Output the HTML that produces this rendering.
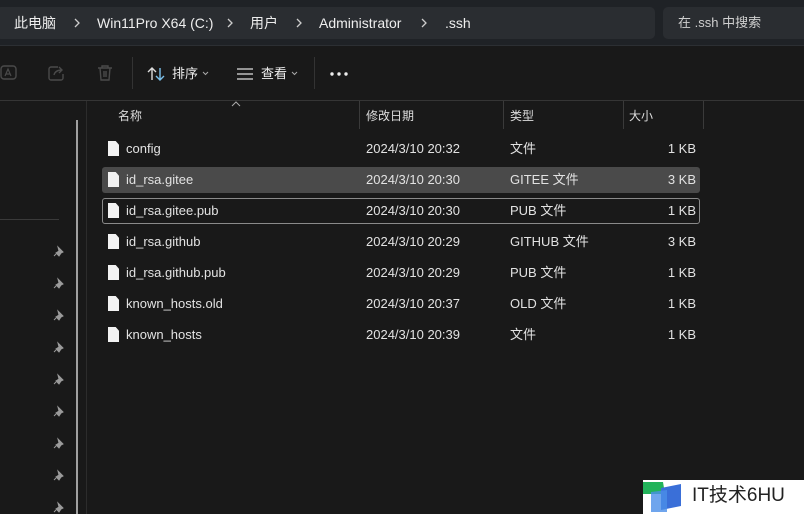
<!DOCTYPE html>
<html><head><meta charset="utf-8"><style>
*{margin:0;padding:0;box-sizing:border-box}
body{width:804px;height:514px;background:#191919;font-family:"Liberation Sans","Noto Sans CJK SC",sans-serif;color:#e6e6e6;position:relative;overflow:hidden;font-size:13px;line-height:16px}
.top{position:absolute;left:0;top:0;width:804px;height:46px;background:#1f2226;border-bottom:1px solid #2c2f33}
.addr{position:absolute;left:-4px;top:7px;width:659px;height:32px;background:#2a2d31;border-radius:5px}
.search{position:absolute;left:663px;top:7px;width:150px;height:32px;background:#2a2d31;border-radius:5px;font-size:13px;color:#cfcfcf;padding:8px 0 0 15px}
.t{position:absolute;top:15px;font-size:14px;color:#eee;white-space:nowrap}
.chev{position:absolute;top:18px}
.tb{position:absolute;font-size:13px;color:#eee;top:66px}
.sep{position:absolute;top:57px;width:1px;height:32px;background:#333}
.hl{position:absolute;left:0;top:100px;width:804px;height:1px;background:#353535}
.hdr{position:absolute;top:108px;font-size:12px;color:#ddd}
.cs{position:absolute;top:101px;width:1px;height:28px;background:#3a3a3a}
.row{position:absolute;left:102px;width:598px;height:26px}
.row span{position:absolute;top:5px;font-size:13px;color:#e2e2e2;white-space:nowrap}
.ic{position:absolute;left:6px;top:5px;width:11px;height:15px;background:#f2f2f2;clip-path:polygon(0 0,70% 0,100% 25%,100% 100%,0 100%)}
.pin{position:absolute;left:53px}
</style></head><body>
<div class="top">
<div class="addr"></div>
<div class="t" style="left:14px">此电脑</div><svg class="chev" style="left:73px" width="8" height="10"><path d="M2 1l4 4-4 4" stroke="#ccc" fill="none" stroke-width="1.3"/></svg>
<div class="t" style="left:97px">Win11Pro X64 (C:)</div><svg class="chev" style="left:226px" width="8" height="10"><path d="M2 1l4 4-4 4" stroke="#ccc" fill="none" stroke-width="1.3"/></svg>
<div class="t" style="left:250px">用户</div><svg class="chev" style="left:295px" width="8" height="10"><path d="M2 1l4 4-4 4" stroke="#ccc" fill="none" stroke-width="1.3"/></svg>
<div class="t" style="left:319px">Administrator</div><svg class="chev" style="left:420px" width="8" height="10"><path d="M2 1l4 4-4 4" stroke="#ccc" fill="none" stroke-width="1.3"/></svg>
<div class="t" style="left:445px">.ssh</div>
<div class="search">在 .ssh 中搜索</div>
</div>
<svg style="position:absolute;left:0;top:64px" width="18" height="18"><rect x="1" y="2" width="15" height="13" rx="3" fill="none" stroke="#4a4a4a" stroke-width="1.4"/><path d="M5 12l3-7 3 7M6 10h4" stroke="#4a4a4a" fill="none" stroke-width="1.2"/></svg>
<svg style="position:absolute;left:48px;top:64px" width="18" height="18"><path d="M10 3h-7a2 2 0 0 0-2 2v9a2 2 0 0 0 2 2h10a2 2 0 0 0 2-2v-4" fill="none" stroke="#4a4a4a" stroke-width="1.4"/><path d="M6 11c1-4 4-5 8-5M11 3l3 3-3 3" fill="none" stroke="#4a4a4a" stroke-width="1.4"/></svg>
<svg style="position:absolute;left:96px;top:64px" width="18" height="18"><path d="M2 4h14M6 4V2h6v2M4 4l1 12h8l1-12M8 7v6M10 7v6" fill="none" stroke="#4a4a4a" stroke-width="1.4"/></svg>
<div class="sep" style="left:132px"></div>
<svg style="position:absolute;left:147px;top:66px" width="18" height="16"><path d="M5 14V2M1 6l4-4 4 4" stroke="#ddd" fill="none" stroke-width="1.4"/><path d="M13 2v12M9 10l4 4 4-4" stroke="#7bc0ea" fill="none" stroke-width="1.4"/></svg>
<div class="tb" style="left:172px">排序</div>
<svg style="position:absolute;left:202px;top:71px" width="7" height="5"><path d="M1 1l2.5 2.5L6 1" stroke="#aaa" fill="none"/></svg>
<svg style="position:absolute;left:237px;top:68px" width="16" height="12"><path d="M0 1h16M0 6h16M0 11h16" stroke="#ddd" stroke-width="1.3"/></svg>
<div class="tb" style="left:261px">查看</div>
<svg style="position:absolute;left:291px;top:71px" width="7" height="5"><path d="M1 1l2.5 2.5L6 1" stroke="#aaa" fill="none"/></svg>
<div class="sep" style="left:314px"></div>
<svg style="position:absolute;left:330px;top:72px" width="18" height="4"><circle cx="2" cy="2" r="1.7" fill="#eee"/><circle cx="9" cy="2" r="1.7" fill="#eee"/><circle cx="16" cy="2" r="1.7" fill="#eee"/></svg>
<div class="hl"></div>
<div style="position:absolute;left:76px;top:120px;width:2px;height:394px;background:#a0a0a0"></div>
<div style="position:absolute;left:86px;top:101px;width:1px;height:413px;background:#2c2c2c"></div>
<div style="position:absolute;left:0;top:219px;width:59px;height:1px;background:#3a3a3a"></div>
<svg style="position:absolute;left:0;top:0" width="80" height="514">
<defs><g id="p"><path d="M4 0l5 5-2 1-2 3-3-3 3-2z M2 7l-2 2" fill="#9a9a9a" stroke="#9a9a9a" stroke-width="1"/></g></defs>
<use href="#p" x="54" y="247"/><use href="#p" x="54" y="279"/><use href="#p" x="54" y="311"/><use href="#p" x="54" y="343"/><use href="#p" x="54" y="375"/><use href="#p" x="54" y="407"/><use href="#p" x="54" y="439"/><use href="#p" x="54" y="471"/><use href="#p" x="54" y="503"/>
</svg>
<svg style="position:absolute;left:231px;top:101px" width="10" height="6"><path d="M1 5l4-4 4 4" stroke="#aaa" fill="none"/></svg>
<div class="hdr" style="left:118px">名称</div>
<div class="cs" style="left:359px"></div><div class="hdr" style="left:366px">修改日期</div>
<div class="cs" style="left:503px"></div><div class="hdr" style="left:510px">类型</div>
<div class="cs" style="left:623px"></div><div class="hdr" style="left:629px">大小</div>
<div class="cs" style="left:703px"></div>

<div class="row" style="top:136px"><div class="ic"></div><span style="left:24px">config</span><span style="left:264px">2024/3/10 20:32</span><span style="left:408px">文件</span><span style="right:4px">1 KB</span></div>
<div class="row" style="top:167px;background:#4a4a4a;border-radius:3px"><div class="ic"></div><span style="left:24px">id_rsa.gitee</span><span style="left:264px">2024/3/10 20:30</span><span style="left:408px">GITEE 文件</span><span style="right:4px">3 KB</span></div>
<div class="row" style="top:198px;border:1px solid #8a8a8a;border-radius:3px"><div class="ic" style="left:5px;top:4px"></div><span style="left:23px;top:4px">id_rsa.gitee.pub</span><span style="left:263px;top:4px">2024/3/10 20:30</span><span style="left:407px;top:4px">PUB 文件</span><span style="right:3px;top:4px">1 KB</span></div>
<div class="row" style="top:229px"><div class="ic"></div><span style="left:24px">id_rsa.github</span><span style="left:264px">2024/3/10 20:29</span><span style="left:408px">GITHUB 文件</span><span style="right:4px">3 KB</span></div>
<div class="row" style="top:260px"><div class="ic"></div><span style="left:24px">id_rsa.github.pub</span><span style="left:264px">2024/3/10 20:29</span><span style="left:408px">PUB 文件</span><span style="right:4px">1 KB</span></div>
<div class="row" style="top:291px"><div class="ic"></div><span style="left:24px">known_hosts.old</span><span style="left:264px">2024/3/10 20:37</span><span style="left:408px">OLD 文件</span><span style="right:4px">1 KB</span></div>
<div class="row" style="top:322px"><div class="ic"></div><span style="left:24px">known_hosts</span><span style="left:264px">2024/3/10 20:39</span><span style="left:408px">文件</span><span style="right:4px">1 KB</span></div>

<div style="position:absolute;left:643px;top:480px;width:161px;height:34px;background:#fff"></div>
<svg style="position:absolute;left:643px;top:480px" width="46" height="34"><polygon points="0,2 20,2 22,14 0,14" fill="#22b35a"/><polygon points="18,8 38,4 38,26 18,30" fill="#3a6fd8"/><polygon points="8,12 24,10 24,32 8,32" fill="#4b8fe8" opacity=".8"/></svg>
<div style="position:absolute;left:692px;top:485px;font-size:19px;line-height:22px;color:#222;white-space:nowrap">IT技术6HU</div>
</body></html>
